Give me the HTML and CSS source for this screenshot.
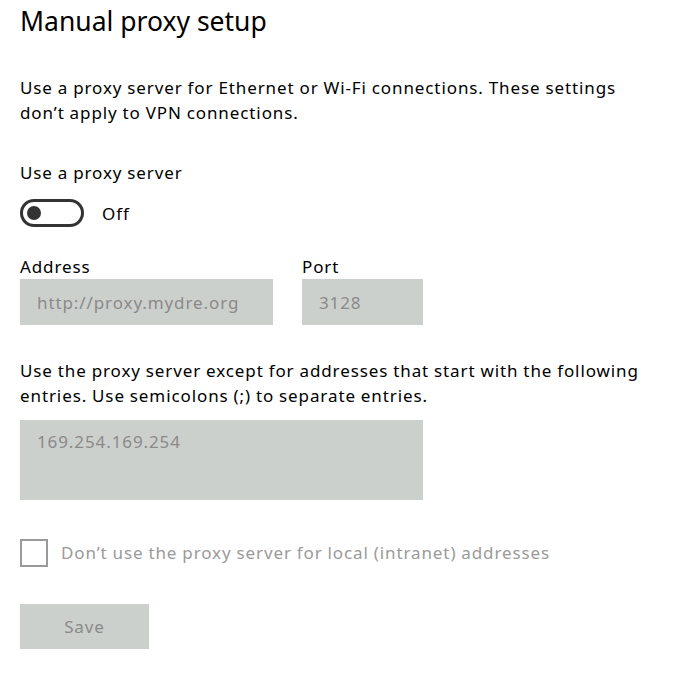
FILE: index.html
```html
<!DOCTYPE html>
<html lang="en">
<head>
<meta charset="utf-8">
<title>Manual proxy setup</title>
<link rel="stylesheet" href="styles.css">
</head>
<body>
<main class="page">
  <h1 class="title">Manual proxy setup</h1>
  <p class="desc">Use a proxy server for Ethernet or Wi-Fi connections. These settings don’t apply to VPN connections.</p>

  <div class="label label-proxy">Use a proxy server</div>
  <div class="toggle-row">
    <span class="toggle"><span class="knob"></span></span>
    <span class="toggle-text">Off</span>
  </div>

  <div class="fields">
    <div class="field">
      <div class="label">Address</div>
      <div class="input input-address">http://proxy.mydre.org</div>
    </div>
    <div class="field">
      <div class="label">Port</div>
      <div class="input input-port">3128</div>
    </div>
  </div>

  <p class="desc desc-except">Use the proxy server except for addresses that start with the following entries. Use semicolons (;) to separate entries.</p>
  <div class="textarea">169.254.169.254</div>

  <div class="check-row">
    <span class="checkbox"></span>
    <span class="check-text">Don’t use the proxy server for local (intranet) addresses</span>
  </div>

  <div class="button">Save</div>
</main>
</body>
</html>
```
FILE: styles.css
```css
html, body {
  margin: 0;
  padding: 0;
  background: #ffffff;
}
body {
  font-family: "Noto Sans", "Open Sans", sans-serif;
  font-size: 17px;
  letter-spacing: 0.9px;
  word-spacing: -0.4px;
  line-height: 25px;
  color: #000000;
}
.page {
  padding: 1px 20px 0 20px;
  width: 628px;
}
.title {
  margin: 0;
  font-size: 26.5px;
  letter-spacing: 0;
  word-spacing: 0;
  font-weight: 400;
  line-height: 40px;
}
.desc {
  margin: 34px 0 0 0;
}
.label-proxy {
  margin-top: 35px;
}
.toggle-row {
  margin-top: 14px;
  display: flex;
  align-items: center;
  gap: 18px;
  height: 28px;
}
.toggle {
  box-sizing: border-box;
  width: 64px;
  height: 28px;
  border: 3px solid #333333;
  border-radius: 14px;
  display: flex;
  align-items: center;
  padding-left: 4px;
}
.knob {
  width: 14px;
  height: 14px;
  border-radius: 50%;
  background: #333333;
}
.fields {
  margin-top: 27px;
  display: flex;
  gap: 29px;
}
.input {
  box-sizing: border-box;
  height: 46px;
  background: #ccd0cc;
  color: #8a8a8a;
  padding-left: 17px;
  display: flex;
  align-items: center;
}
.input-address { width: 253px; }
.input-port { width: 121px; }
.desc-except {
  margin-top: 33px;
}
.textarea {
  box-sizing: border-box;
  margin-top: 12px;
  width: 403px;
  height: 80px;
  background: #ccd0cc;
  color: #8a8a8a;
  padding: 9px 17px;
}
.check-row {
  margin-top: 38px;
  display: flex;
  align-items: center;
  gap: 13px;
  height: 29px;
}
.checkbox {
  box-sizing: border-box;
  width: 28px;
  height: 28px;
  border: 2.5px solid #9a9a9a;
}
.check-text {
  color: #9a9a9a;
}
.button {
  box-sizing: border-box;
  margin-top: 37px;
  width: 129px;
  height: 45px;
  background: #ccd0cc;
  color: #8a8a8a;
  display: flex;
  align-items: center;
  justify-content: center;
}
```
